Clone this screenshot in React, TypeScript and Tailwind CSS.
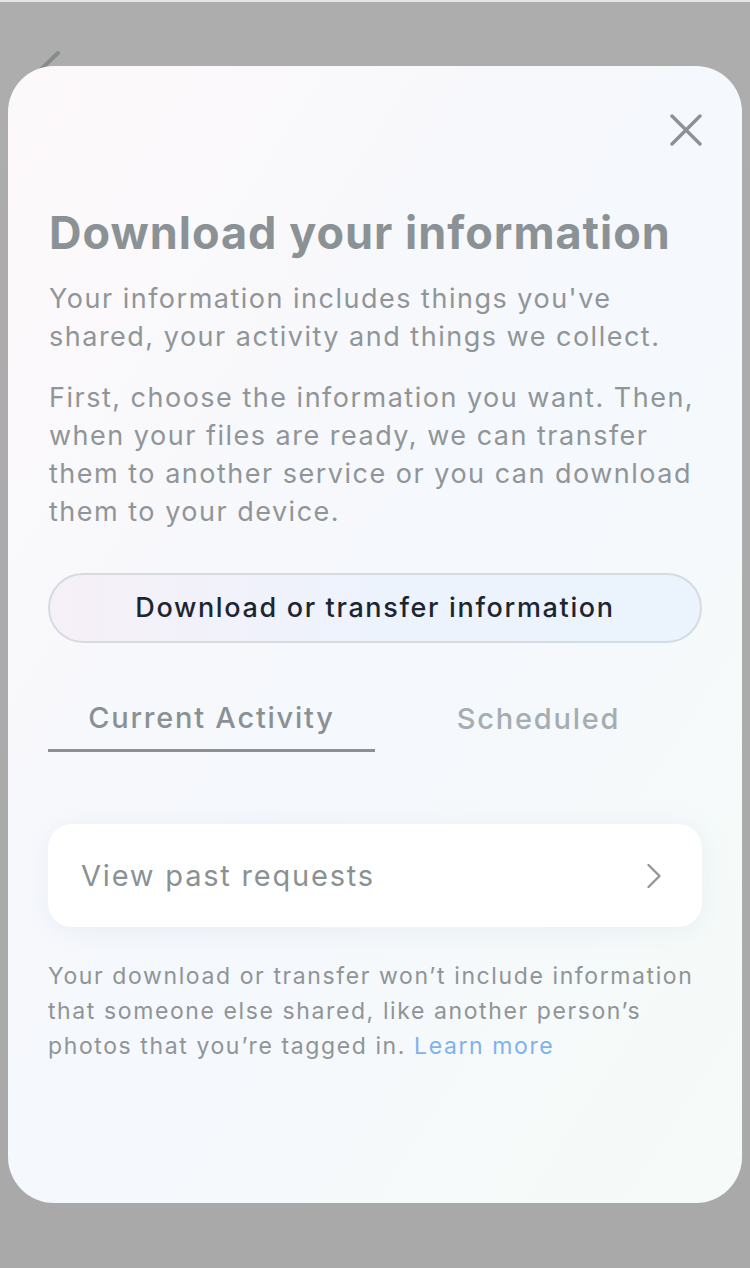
import { ChevronRight } from "lucide-react";

const font = { fontFamily: "Inter, 'Noto Sans', sans-serif" };

export default function App() {
  return (
    <div
      className="relative w-[750px] h-[1268px] overflow-hidden bg-gradient-to-b from-[#adadad] to-[#a8a9a8]"
      style={font}
    >
      <div className="h-[2px] bg-[#e4e4e4]" />

      {/* back arrow of the page under the sheet */}
      <svg className="absolute left-0 top-0" width="80" height="100" viewBox="0 0 80 100">
        <path d="M58 53 L36 74" stroke="#878b8b" strokeWidth="4" strokeLinecap="round" fill="none" />
      </svg>

      <div className="relative px-[8px] pt-[64px]">
        <div className="h-[1137px] rounded-[46px] bg-gradient-to-br from-[#fdf9fa] via-[#f5f8fd] to-[#f5fbf8] px-[40px] pt-[48px]">
          <div className="flex justify-end">
            <svg width="32" height="32" viewBox="0 0 32 32">
              <path d="M2 2 L30 30 M30 2 L2 30" stroke="#8c9293" strokeWidth="3.4" strokeLinecap="round" fill="none" />
            </svg>
          </div>

          <h1 className="mt-[59px] text-[45px] leading-[56px] font-bold text-[#8b9295] tracking-[1px] pl-[1px]">
            Download your information
          </h1>

          <div className="mt-[19px] text-[27px] leading-[38px] text-[#909598] tracking-[1.5px] pl-[1px]">
            <p>Your information includes things you've shared, your activity and things we collect.</p>
            <p className="mt-[23px]">
              First, choose the information you want. Then, when your files are ready, we can transfer them to another
              service or you can download them to your device.
            </p>
          </div>

          <button className="mt-[42px] w-full h-[70px] rounded-full border-2 border-[#d6dbe0] bg-gradient-to-r from-[#f6f0f7] via-[#edf3fd] to-[#ebf3fd] text-[27px] font-medium tracking-[1.65px] text-[#1c2630]">
            Download or transfer information
          </button>

          <div className="mt-[43px] grid grid-cols-2">
            <div className="h-[66px] flex items-center justify-center border-b-[3px] border-[#8a9194] text-[29px] font-medium tracking-[1.75px] text-[#8a9194]">
              Current Activity
            </div>
            <div className="h-[66px] flex items-center justify-center text-[29px] font-medium tracking-[1.75px] text-[#a6adb1]">
              Scheduled
            </div>
          </div>

          <div className="mt-[72px] h-[103px] rounded-[24px] bg-white shadow-[0_4px_24px_rgba(200,210,225,0.25)] flex items-center justify-between pl-[33px] pr-[26px]">
            <span className="text-[29px] tracking-[1.8px] text-[#8a9194]">View past requests</span>
            <ChevronRight className="w-[44px] h-[44px] text-[#8f979b]" strokeWidth={1.3} />
          </div>

          <p className="mt-[32px] text-[23px] leading-[35px] tracking-[1.6px] text-[#8f9497]">
            Your download or transfer won’t include information that someone else shared, like another person’s photos
            that you’re tagged in. <a className="text-[#7fb1ee]">Learn more</a>
          </p>
        </div>
      </div>
    </div>
  );
}
